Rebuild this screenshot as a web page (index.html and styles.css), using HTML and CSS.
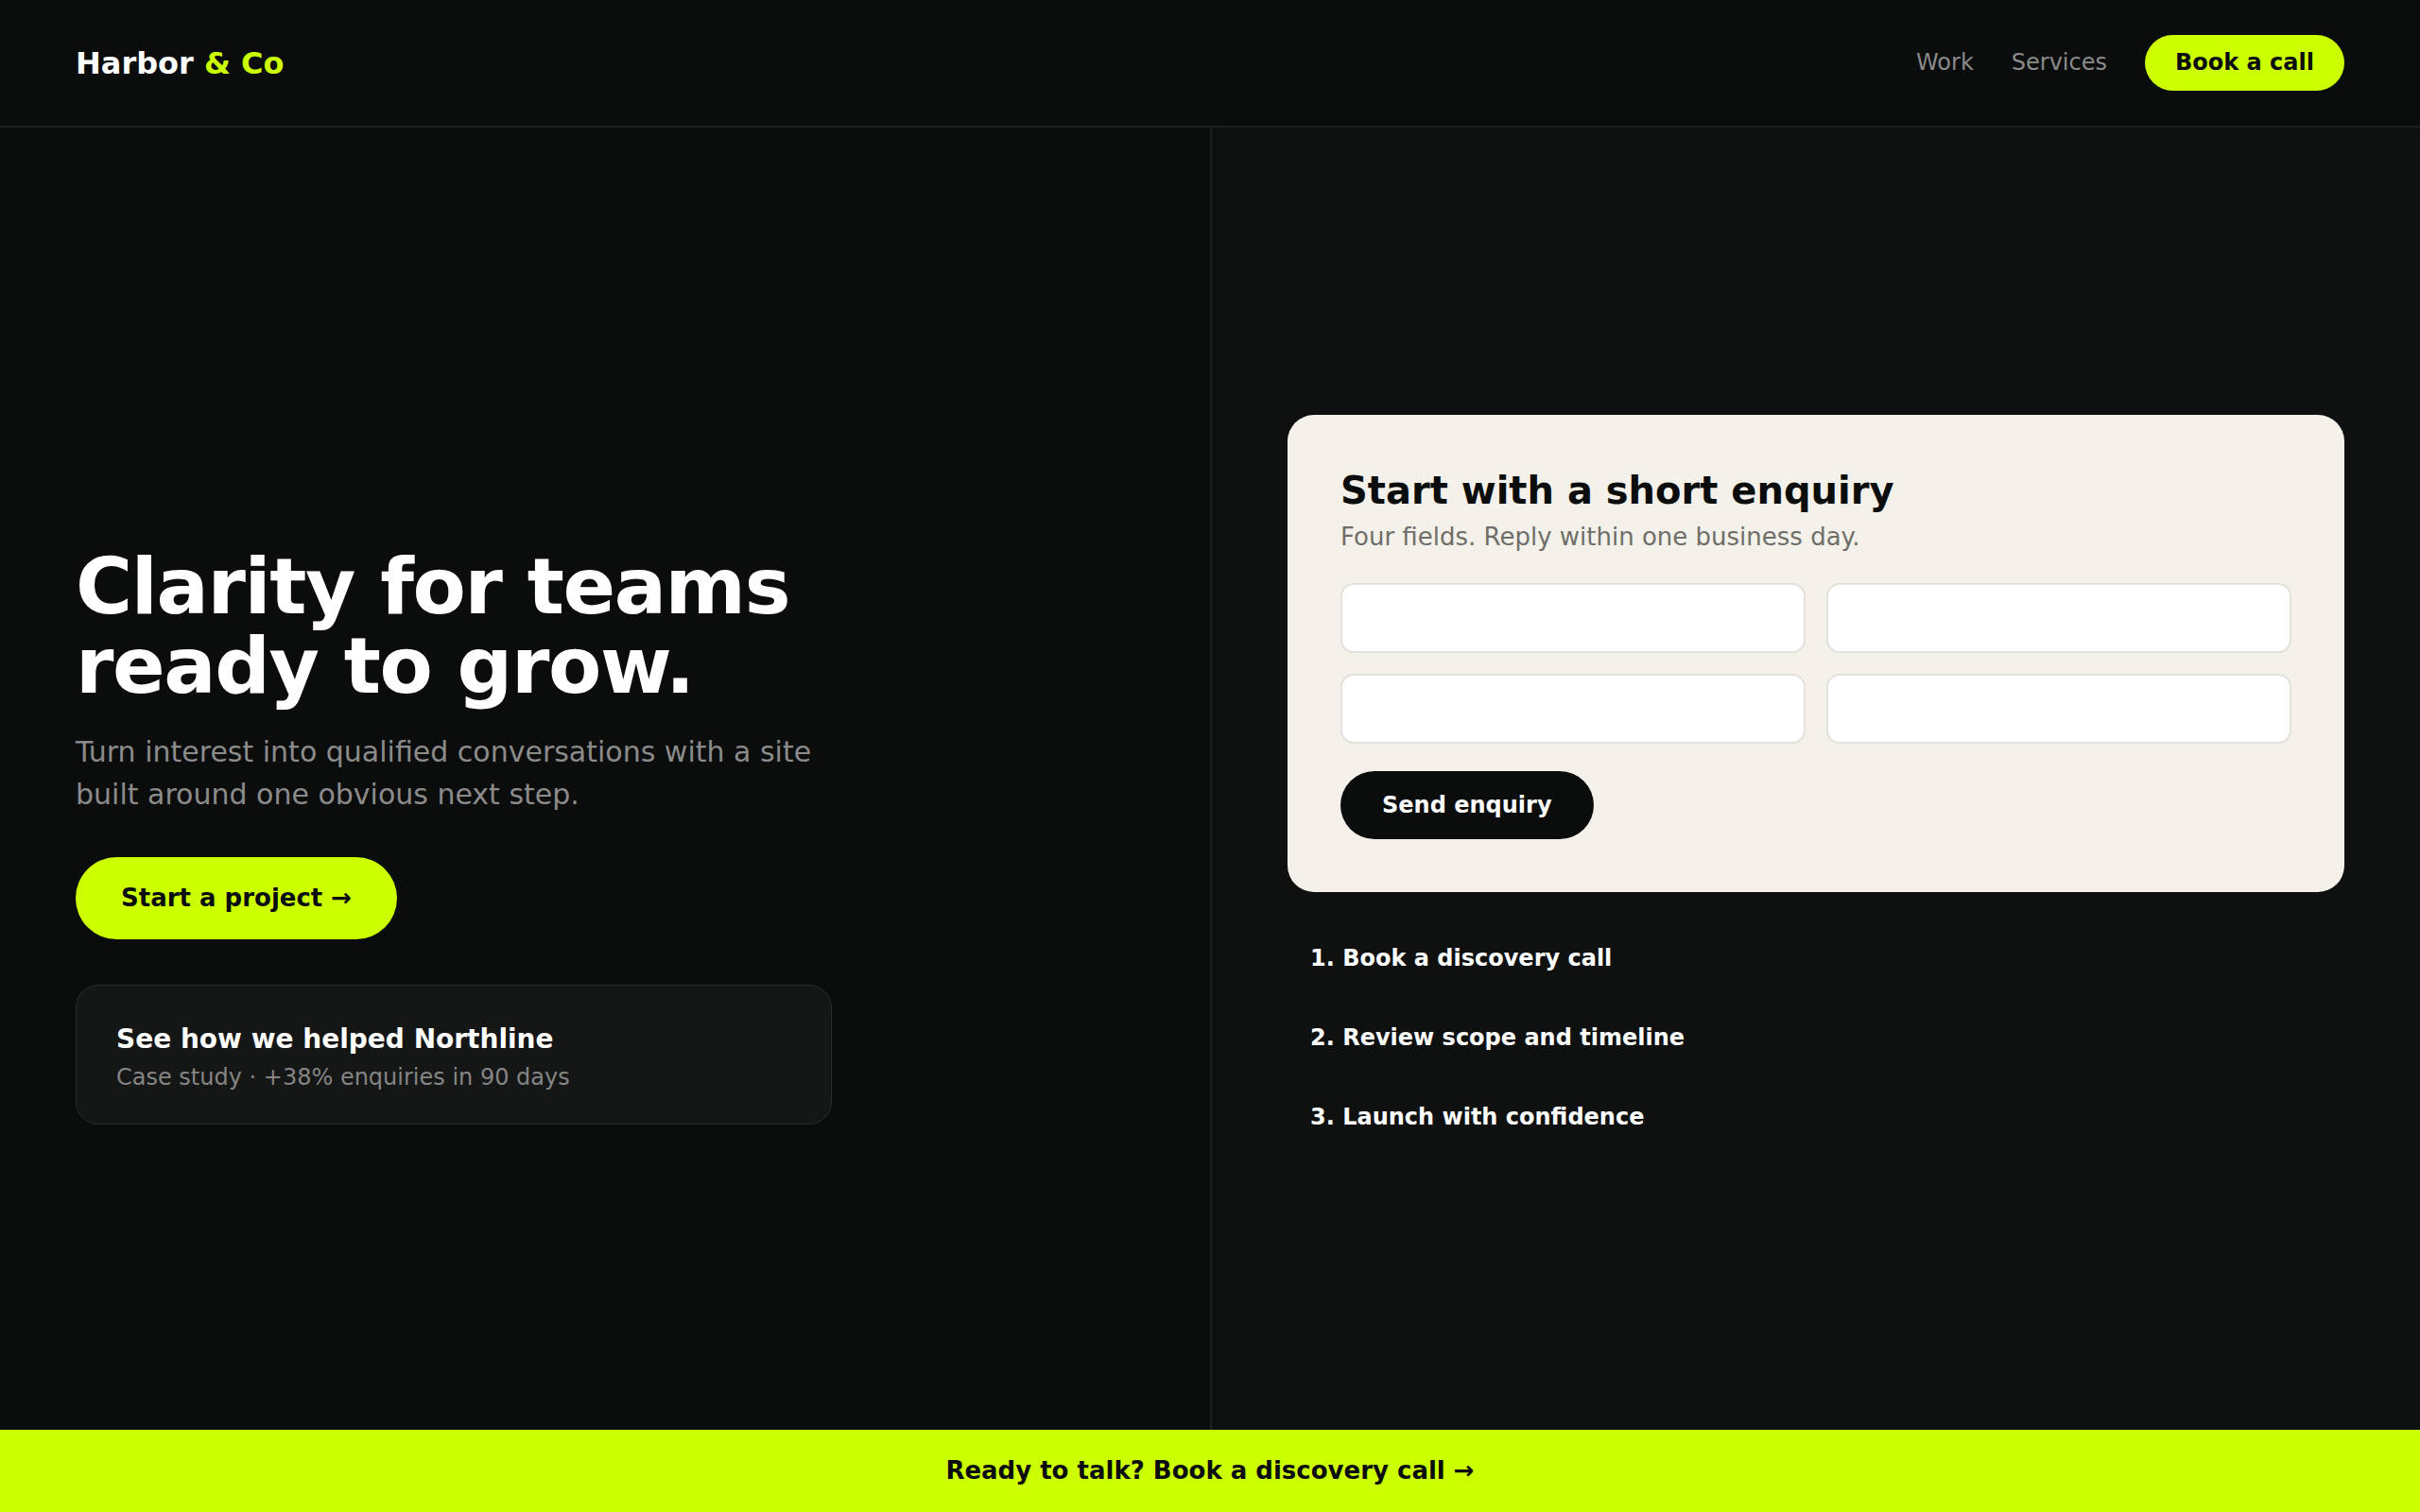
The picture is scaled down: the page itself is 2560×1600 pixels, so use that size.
FILE: index.html
```html
<!DOCTYPE html>
<html lang="en">
<head>
<meta charset="utf-8">
<title>Harbor &amp; Co</title>
<link rel="stylesheet" href="styles.css">
</head>
<body>
<header class="site-header">
  <div class="logo">Harbor <span class="accent">&amp; Co</span></div>
  <nav class="nav">
    <a class="nav-link" href="#">Work</a>
    <a class="nav-link" href="#">Services</a>
    <a class="btn btn-lime btn-nav" href="#">Book a call</a>
  </nav>
</header>
<main class="hero">
  <section class="hero-left">
    <div class="hero-inner">
      <h1 class="headline">Clarity for teams ready to grow.</h1>
      <p class="lede">Turn interest into qualified conversations with a site built around one obvious next step.</p>
      <a class="btn btn-lime btn-hero" href="#">Start a project →</a>
      <a class="case-card" href="#">
        <span class="case-title">See how we helped Northline</span>
        <span class="case-sub">Case study · +38% enquiries in 90 days</span>
      </a>
    </div>
  </section>
  <section class="hero-right">
    <div class="right-inner">
      <form class="enquiry">
        <h2 class="enquiry-title">Start with a short enquiry</h2>
        <p class="enquiry-sub">Four fields. Reply within one business day.</p>
        <div class="fields">
          <input class="field" type="text" aria-label="Name">
          <input class="field" type="email" aria-label="Email">
          <input class="field" type="text" aria-label="Company">
          <input class="field" type="text" aria-label="Budget">
        </div>
        <button class="btn btn-dark" type="button">Send enquiry</button>
      </form>
      <ol class="steps">
        <li class="step">1. Book a discovery call</li>
        <li class="step">2. Review scope and timeline</li>
        <li class="step">3. Launch with confidence</li>
      </ol>
    </div>
  </section>
</main>
<footer class="cta-bar">Ready to talk? Book a discovery call →</footer>
</body>
</html>
```

FILE: styles.css
```css
* { box-sizing: border-box; }

html, body {
  margin: 0;
  padding: 0;
}

body {
  height: 100vh;
  display: flex;
  flex-direction: column;
  background: #0b0c0c;
  color: #ffffff;
  font-family: "DejaVu Sans", "Liberation Sans", sans-serif;
}

a { text-decoration: none; color: inherit; }

/* Header */
.site-header {
  display: flex;
  align-items: center;
  justify-content: space-between;
  padding: 37px 80px;
  background: #0b0c0c;
  border-bottom: 2px solid #1e2020;
}

.logo {
  font-size: 32px;
  font-weight: 700;
  line-height: 38px;
  color: #ffffff;
}

.logo .accent { color: #ccff00; }

.nav {
  display: flex;
  align-items: center;
  gap: 40px;
}

.nav-link {
  font-size: 24px;
  line-height: 29px;
  color: #8a8a8a;
}

.btn {
  display: inline-block;
  border: 0;
  border-radius: 999px;
  font-family: inherit;
  font-weight: 700;
  cursor: pointer;
}

.btn-lime {
  background: #ccff00;
  color: #0b0c0c;
}

.btn-nav {
  font-size: 24px;
  line-height: 29px;
  padding: 15px 32px;
}

/* Hero */
.hero {
  flex: 1;
  display: grid;
  grid-template-columns: 1fr 1fr;
  min-height: 0;
}

.hero-left {
  display: flex;
  flex-direction: column;
  justify-content: center;
  padding: 120px 80px 0;
  background: #0b0c0c;
}

.hero-inner {
  width: 800px;
  display: flex;
  flex-direction: column;
  align-items: flex-start;
}

.headline {
  margin: 0;
  font-size: 82px;
  line-height: 84px;
  font-weight: 700;
  letter-spacing: -0.017em;
  color: #ffffff;
}

.lede {
  margin: 26px 0 0;
  font-size: 30px;
  line-height: 45px;
  color: #8b8b8b;
}

.btn-hero {
  margin-top: 44px;
  font-size: 26px;
  line-height: 31px;
  padding: 28px 48px;
}

.case-card {
  margin-top: 48px;
  align-self: stretch;
  display: flex;
  flex-direction: column;
  gap: 6px;
  padding: 40px 42px 32px;
  background: #151616;
  border: 1px solid #2b2d2d;
  border-radius: 24px;
}

.case-title {
  font-size: 28px;
  line-height: 34px;
  font-weight: 700;
  color: #ffffff;
}

.case-sub {
  font-size: 24px;
  line-height: 34px;
  color: #858585;
}

/* Right column */
.hero-right {
  display: flex;
  flex-direction: column;
  justify-content: center;
  padding: 14px 80px 0;
  background: #0f1110;
  border-left: 2px solid #1e2020;
}

.enquiry {
  margin: 0;
  padding: 56px;
  background: #f3f1ea;
  border-radius: 28px;
  color: #0b0c0c;
}

.enquiry-title {
  margin: 0 0 6px;
  font-size: 40px;
  line-height: 48px;
  font-weight: 700;
}

.enquiry-sub {
  margin: 0;
  font-size: 26px;
  line-height: 39px;
  color: #6f6e69;
}

.fields {
  margin-top: 29px;
  display: grid;
  grid-template-columns: 1fr 1fr;
  gap: 22px;
}

.field {
  height: 74px;
  width: 100%;
  border: 2px solid #e2e1dc;
  border-radius: 14px;
  background: #ffffff;
  font-family: inherit;
  font-size: 24px;
  padding: 0 20px;
}

.btn-dark {
  margin-top: 29px;
  background: #0b0c0c;
  color: #ffffff;
  font-size: 24px;
  line-height: 28px;
  padding: 22px 44px;
}

.steps {
  list-style: none;
  margin: 28px 0 0;
  padding: 0;
}

.step {
  padding: 24px;
  font-size: 24px;
  line-height: 36px;
  font-weight: 700;
  color: #ffffff;
}

/* Footer CTA */
.cta-bar {
  padding: 28px 0;
  background: #ccff00;
  color: #0b0c0c;
  text-align: center;
  font-size: 26px;
  line-height: 31px;
  font-weight: 700;
}
```
